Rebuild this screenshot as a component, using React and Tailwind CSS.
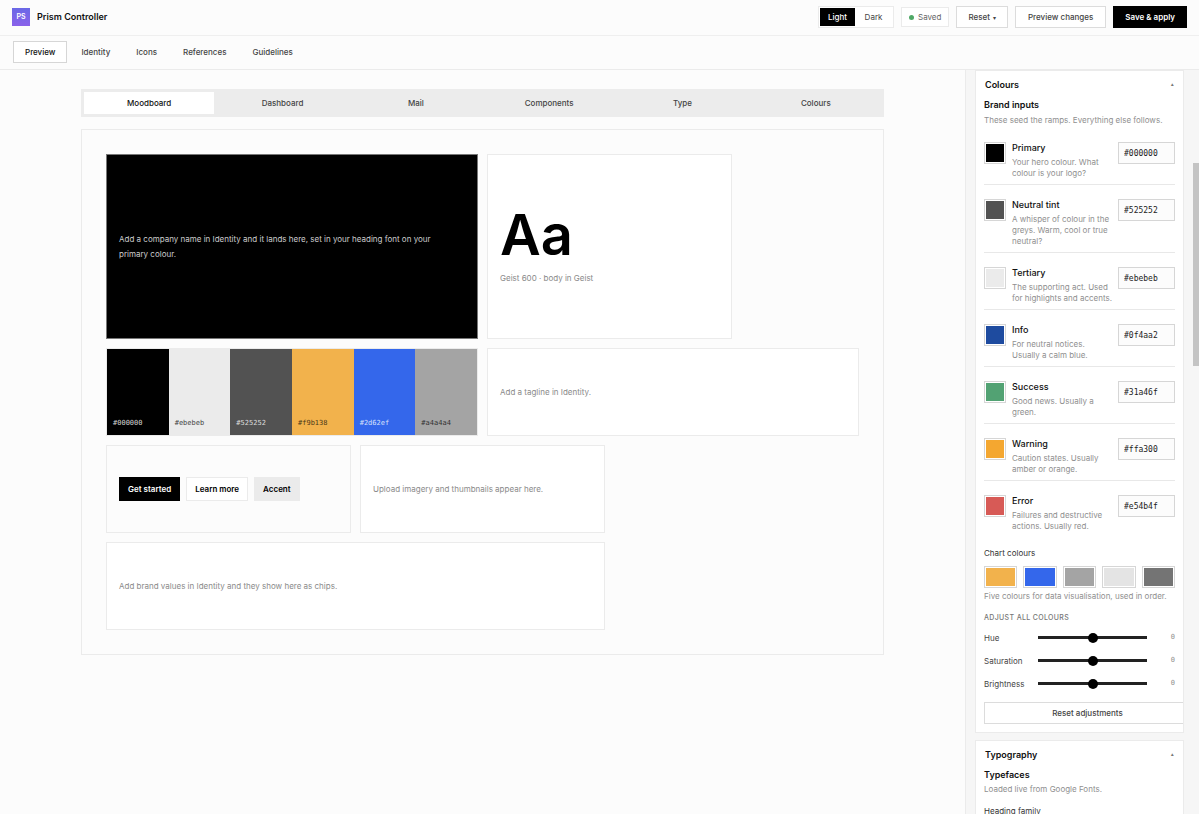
import React, { useState } from 'react'

const navItems = ['Preview', 'Identity', 'Icons', 'References', 'Guidelines']

const previewTabs = ['Moodboard', 'Dashboard', 'Mail', 'Components', 'Type', 'Colours']

const swatches = [
  { hex: '#000000', style: 'bg-black text-[#d4d4d4]' },
  { hex: '#ebebeb', style: 'bg-[#ebebeb] text-[#444444]' },
  { hex: '#525252', style: 'bg-[#525252] text-[#dddddd]' },
  { hex: '#f9b138', style: 'bg-[#f2b24c] text-[#4a3818]' },
  { hex: '#2d62ef', style: 'bg-[#3467eb] text-[#d6e0fb]' },
  { hex: '#a4a4a4', style: 'bg-[#a4a4a4] text-[#333333]' },
]

const brandInputs = [
  { name: 'Primary', hint: 'Your hero colour. What colour is your logo?', hex: '#000000', shown: '#000000' },
  { name: 'Neutral tint', hint: 'A whisper of colour in the greys. Warm, cool or true neutral?', hex: '#525252', shown: '#525252' },
  { name: 'Tertiary', hint: 'The supporting act. Used for highlights and accents.', hex: '#ebebeb', shown: '#ebebeb' },
  { name: 'Info', hint: 'For neutral notices. Usually a calm blue.', hex: '#0f4aa2', shown: '#1e4b9f' },
  { name: 'Success', hint: 'Good news. Usually a green.', hex: '#31a46f', shown: '#52a273' },
  { name: 'Warning', hint: 'Caution states. Usually amber or orange.', hex: '#ffa300', shown: '#f4a730' },
  { name: 'Error', hint: 'Failures and destructive actions. Usually red.', hex: '#e54b4f', shown: '#d75a56' },
]

const chartColours = ['#f2b24c', '#3467eb', '#a4a4a4', '#e4e4e4', '#747474']

const mono = "font-['DejaVu_Sans_Mono',monospace]"

function ColourWell({ value, label, className }) {
  return (
    <input
      type="color"
      aria-label={label}
      defaultValue={value}
      className={`block h-[22px] cursor-pointer appearance-none border border-[#d6d6d6] bg-white p-px [&::-webkit-color-swatch]:border-0 [&::-webkit-color-swatch-wrapper]:p-0 ${className}`}
    />
  )
}

function BrandInput({ name, hint, hex, shown }) {
  return (
    <div className="flex items-start border-b border-[#e8e8e8] pb-[5px] pt-[14px] last:border-b-0">
      <ColourWell value={shown} label={name + ' swatch'} className="w-[22px] shrink-0" />
      <div className="ml-[6px] min-w-0 flex-1">
        <label htmlFor={name} className="mb-[3px] block text-[9px] leading-3 font-medium text-[#111111]">
          {name}
        </label>
        <p className="text-[8px] leading-[11px] text-[#8f8f8f]">{hint}</p>
      </div>
      <input
        id={name}
        type="text"
        defaultValue={hex}
        className={`ml-[5px] h-[22px] w-[57px] shrink-0 border border-[#d6d6d6] bg-[#fcfcfc] px-[5px] text-[8px] text-[#222222] outline-none ${mono}`}
      />
    </div>
  )
}

function Slider({ name }) {
  const [value, setValue] = useState(0)
  return (
    <div className="flex h-[23px] items-center">
      <label htmlFor={name} className="w-[54px] text-[8px] text-[#444444]">
        {name}
      </label>
      <input
        id={name}
        type="range"
        min="-100"
        max="100"
        value={value}
        onChange={(e) => setValue(Number(e.target.value))}
        className="h-[3px] min-w-0 flex-1 cursor-pointer appearance-none bg-[#222222] [&::-webkit-slider-thumb]:size-[10px] [&::-webkit-slider-thumb]:appearance-none [&::-webkit-slider-thumb]:rounded-full [&::-webkit-slider-thumb]:bg-black"
      />
      <span className={`w-7 text-right text-[7px] text-[#8f8f8f] ${mono}`}>{value}</span>
    </div>
  )
}

function PanelHeader({ title }) {
  return (
    <button className="flex h-[27px] w-full cursor-pointer items-center justify-between px-[9px] text-[9px] font-semibold text-[#111111]">
      {title}
      <span className="text-[5px] text-[#777777]">▴</span>
    </button>
  )
}

function Card({ className, children }) {
  return <div className={`flex flex-col justify-center border px-3 ${className}`}>{children}</div>
}

function Header() {
  return (
    <header className="flex h-9 shrink-0 items-center justify-between border-b border-[#efefef] px-3 pb-px">
      <div className="flex items-center gap-[7px]">
        <span className="flex size-[18px] items-center justify-center bg-linear-to-b from-[#6a68e6] to-[#8a62ea] text-[7px] font-semibold text-white">
          PS
        </span>
        <h1 className="text-[9px] font-semibold text-[#111111]">Prism Controller</h1>
      </div>
      <div className="flex items-center gap-[7px] text-[8px]">
        <div className="flex h-[22px] border border-[#ebebeb] bg-white p-px">
          <button className="w-[35px] cursor-pointer bg-black font-medium text-white">Light</button>
          <button className="w-[37px] cursor-pointer text-[#444444]">Dark</button>
        </div>
        <div className="flex h-[20px] items-center gap-1 border border-[#ebebeb] bg-white px-[7px] text-[#666666]">
          <span className="size-[5px] rounded-full bg-[#4fa866]"></span>
          Saved
        </div>
        <button className="flex h-[22px] cursor-pointer items-center gap-[3px] border border-[#dcdcdc] bg-white px-[11px] font-medium text-[#444444]">
          Reset <span className="text-[6px]">▾</span>
        </button>
        <button className="h-[22px] cursor-pointer border border-[#dcdcdc] bg-white px-3 font-medium text-[#444444]">
          Preview changes
        </button>
        <button className="h-[22px] cursor-pointer bg-black px-3 font-semibold text-white">Save & apply</button>
      </div>
    </header>
  )
}

function Moodboard() {
  return (
    <section className="mt-3 border border-[#ebebeb] p-6 text-[8px] leading-[15px] text-[#8a8a8a]">
      <div className="grid auto-rows-[88px] grid-cols-6 gap-[9px]">
        <Card className="col-span-3 row-span-2 border-[#777777] bg-black text-[#cccccc]">
          <p className="max-w-[335px]">
            Add a company name in Identity and it lands here, set in your heading font on your primary colour.
          </p>
        </Card>
        <Card className="col-span-2 row-span-2 border-[#ebebeb] bg-white">
          <p className="text-[56px] leading-[56px] font-semibold text-black">Aa</p>
          <p className="mt-2">Geist 600 · body in Geist</p>
        </Card>
        <div className="col-span-3 flex border border-[#ebebeb]">
          {swatches.map((s) => (
            <div key={s.hex} className={`flex flex-1 items-end px-[6px] pb-1 text-[7px] ${mono} ${s.style}`}>
              {s.hex}
            </div>
          ))}
        </div>
        <Card className="col-span-3 border-[#ebebeb] bg-white">
          <p>Add a tagline in Identity.</p>
        </Card>
        <Card className="col-span-2 border-[#ebebeb]">
          <div className="flex items-center gap-[6px] font-semibold">
            <button className="h-6 cursor-pointer bg-black px-[9px] text-white">Get started</button>
            <button className="h-6 cursor-pointer border border-[#ebebeb] bg-white px-2 text-black">Learn more</button>
            <button className="h-6 cursor-pointer bg-[#ebebeb] px-[9px] text-black">Accent</button>
          </div>
        </Card>
        <Card className="col-span-2 border-[#ebebeb] bg-white">
          <p>Upload imagery and thumbnails appear here.</p>
        </Card>
        <Card className="col-span-4 border-[#ebebeb] bg-white">
          <p>Add brand values in Identity and they show here as chips.</p>
        </Card>
      </div>
    </section>
  )
}

function Sidebar() {
  return (
    <aside className="relative w-[234px] shrink-0 overflow-hidden border-l border-[#ebebeb] bg-[#f6f6f6] pl-[9px] pr-[15px]">
      <section className="overflow-hidden border border-[#ebebeb] bg-white pb-2">
        <PanelHeader title="Colours" />
        <div className="px-2">
          <h2 className="text-[9px] leading-[14px] font-semibold text-[#111111]">Brand inputs</h2>
          <p className="mt-[2px] text-[8px] leading-3 text-[#8f8f8f]">These seed the ramps. Everything else follows.</p>
          <div className="mt-[2px]">
            {brandInputs.map((b) => (
              <BrandInput key={b.name} {...b} />
            ))}
          </div>
          <h3 className="mt-[10px] text-[8px] leading-3 text-[#333333]">Chart colours</h3>
          <div className="mt-[7px] flex gap-[6px]">
            {chartColours.map((c) => (
              <ColourWell key={c} value={c} label={'Chart colour ' + c} className="min-w-0 flex-1" />
            ))}
          </div>
          <p className="mt-[2px] text-[8px] leading-3 text-[#8f8f8f]">Five colours for data visualisation, used in order.</p>
          <h3 className="mt-[10px] mb-[2px] text-[7px] leading-3 font-medium tracking-wider text-[#777777]">
            ADJUST ALL COLOURS
          </h3>
          <Slider name="Hue" />
          <Slider name="Saturation" />
          <Slider name="Brightness" />
          <button className="mt-[7px] h-[22px] w-[calc(100%+16px)] cursor-pointer border border-[#dcdcdc] text-[8px] font-medium text-[#444444]">
            Reset adjustments
          </button>
        </div>
      </section>

      <section className="mt-[7px] border border-[#ebebeb] bg-white pb-2">
        <PanelHeader title="Typography" />
        <div className="px-2">
          <h2 className="text-[9px] leading-[14px] font-semibold text-[#111111]">Typefaces</h2>
          <p className="mt-px text-[8px] leading-3 text-[#8f8f8f]">Loaded live from Google Fonts.</p>
          <h3 className="mt-[10px] text-[8px] leading-3 text-[#333333]">Heading family</h3>
        </div>
      </section>

      {/* scroll thumb */}
      <div className="absolute top-[93px] right-0 h-[203px] w-[6px] bg-[#c4c4c4]"></div>
    </aside>
  )
}

function App() {
  return (
    <div className="flex h-screen flex-col overflow-hidden bg-[#fcfcfc] font-['Inter',sans-serif]">
      <Header />
      <nav className="flex h-[34px] shrink-0 items-center gap-[2px] border-b border-[#ebebeb] px-[13px] pb-px text-[8px] font-medium">
        {navItems.map((item, i) => (
          <button
            key={item}
            className={`h-[22px] cursor-pointer border px-[11px] ${
              i === 0 ? 'border-[#d6d6d6] bg-white text-[#111111]' : 'border-transparent text-[#444444]'
            }`}
          >
            {item}
          </button>
        ))}
      </nav>
      <div className="flex min-h-0 flex-1">
        <main className="min-w-0 flex-1 overflow-hidden px-5 pt-[19px]">
          <div className="mx-auto max-w-[803px]">
            <div className="flex gap-[3px] bg-[#ececec] p-[3px] text-[8px] font-medium">
              {previewTabs.map((tab, i) => (
                <button
                  key={tab}
                  className={`h-[22px] flex-1 cursor-pointer ${
                    i === 0 ? 'bg-white text-[#111111]' : 'text-[#444444]'
                  }`}
                >
                  {tab}
                </button>
              ))}
            </div>
            <Moodboard />
          </div>
        </main>
        <Sidebar />
      </div>
    </div>
  )
}

export default App
